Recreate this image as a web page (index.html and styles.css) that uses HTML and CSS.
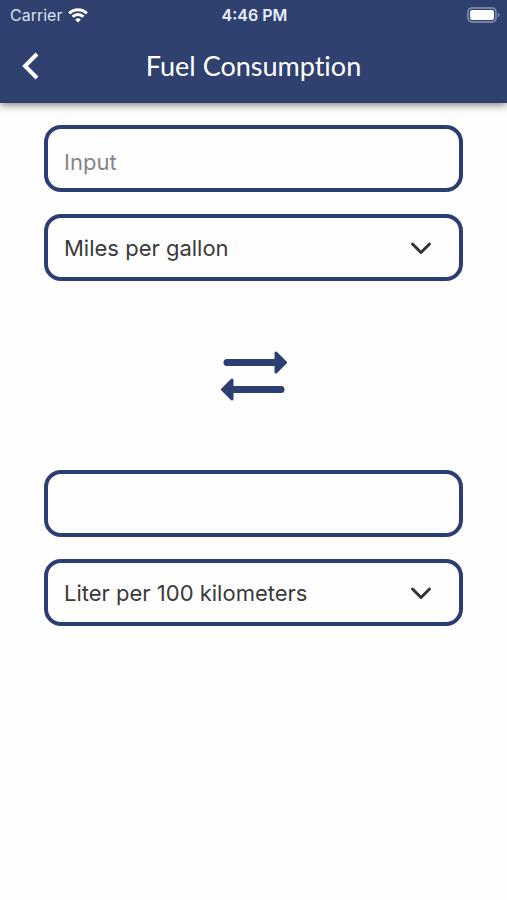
FILE: index.html
```
<!DOCTYPE html>
<html lang="en">
<head>
    <meta charset="UTF-8">
    <meta name="viewport" content="width=device-width, initial-scale=1.0">
    <title>Fuel Consumption</title>
    <link rel="stylesheet" href="styles.css">
</head>
<body>
    <header class="header">
        <div class="status-bar">
            <div class="carrier">
                <span>Carrier</span>
                <svg class="wifi" viewBox="0 0 20 15" aria-hidden="true">
                    <path d="M1.2 5.4a12.6 12.6 0 0 1 17.6 0" />
                    <path d="M4.6 8.8a7.7 7.7 0 0 1 10.8 0" />
                    <path class="wifi-dot" d="M10 14.6l-2.8-2.9a4 4 0 0 1 5.6 0z" />
                </svg>
            </div>
            <span class="time">4:46 PM</span>
            <svg class="battery" viewBox="0 0 34 16" aria-hidden="true">
                <rect class="battery-case" x="1" y="1" width="28" height="14" rx="4" />
                <rect class="battery-level" x="3" y="3" width="24" height="10" rx="2" />
                <path class="battery-cap" d="M31 6c2 .6 2 3.400 0 4z" />
            </svg>
        </div>
        <div class="title-bar">
            <button class="back" type="button" aria-label="Back">
                <svg viewBox="0 0 18 28" aria-hidden="true">
                    <path d="M16 2L4 14l12 12" />
                </svg>
            </button>
            <h1>Fuel Consumption</h1>
        </div>
    </header>

    <main class="converter">
        <div class="group">
            <input class="field" type="text" id="fromValue" placeholder="Input" aria-label="Input">
            <div class="select-box">
                <select class="field" id="fromUnit" aria-label="Convert from">
                    <option selected>Miles per gallon</option>
                    <option>Liter per 100 kilometers</option>
                </select>
                <svg class="chevron" viewBox="0 0 22 14" aria-hidden="true">
                    <path d="M2.500 3l8.500 8.500L19.500 3" />
                </svg>
            </div>
        </div>

        <button class="swap" type="button" id="swap" aria-label="Swap units">
            <svg viewBox="0 0 66 50" aria-hidden="true">
                <path class="swap-line" d="M6 11.500h50M10 38.500h50" />
                <path class="swap-head" d="M55 2l9.500 9.500L55 21zM11 29l-9.500 9.500L11 48z" />
            </svg>
        </button>

        <div class="group">
            <input class="field" type="text" id="toValue" aria-label="Result" readonly>
            <div class="select-box">
                <select class="field" id="toUnit" aria-label="Convert to">
                    <option>Miles per gallon</option>
                    <option selected>Liter per 100 kilometers</option>
                </select>
                <svg class="chevron" viewBox="0 0 22 14" aria-hidden="true">
                    <path d="M2.500 3l8.500 8.500L19.500 3" />
                </svg>
            </div>
        </div>
    </main>
</body>
</html>
```
FILE: styles.css
```
* {
    box-sizing: border-box;
}

body {
    margin: 0;
    background: #fefefe;
    font-family: Inter, "Liberation Sans", sans-serif;
}

svg {
    display: block;
    fill: none;
}

button {
    padding: 0;
    border: none;
    background: none;
    cursor: pointer;
}

.header {
    background: #304170;
    color: #fff;
    box-shadow: 0 2px 8px rgba(0, 0, 0, 0.5);
}

.status-bar {
    display: grid;
    grid-template-columns: 1fr auto 1fr;
    align-items: center;
    height: 30px;
    padding: 0 8px 0 10px;
    font-size: 16px;
}

.carrier {
    display: flex;
    align-items: center;
    gap: 6px;
    color: #d9e0f0;
}

.wifi {
    width: 20px;
    height: 15px;
    stroke: #fff;
    stroke-width: 3;
}

.wifi-dot {
    fill: #fff;
    stroke: none;
}

.time {
    color: #eaf0fb;
    font-weight: 600;
}

.battery {
    justify-self: end;
    width: 34px;
    height: 16px;
    margin-right: -2px;
}

.battery-case {
    stroke: #8c97b4;
    stroke-width: 1.5;
}

.battery-level {
    fill: #fff;
}

.battery-cap {
    fill: #8c97b4;
}

.title-bar {
    display: grid;
    grid-template-columns: 48px 1fr 48px;
    align-items: center;
    height: 73px;
    padding-bottom: 2px;
}

.back {
    padding-left: 21px;
}

.back svg {
    width: 18px;
    height: 28px;
    stroke: #fff;
    stroke-width: 4;
}

h1 {
    margin: 0;
    font-family: Lato, sans-serif;
    font-size: 27px;
    font-weight: 400;
    font-variant-ligatures: none;
    text-align: center;
}

.converter {
    padding: 22px 44px;
}

.group {
    display: grid;
    gap: 22px;
}

.field {
    display: block;
    width: 100%;
    height: 67px;
    padding: 0 16px;
    border: 4px solid #2b3e73;
    border-radius: 17px;
    background: #fefefe;
    color: #3a3a3a;
    font-family: inherit;
    font-size: 22px;
    appearance: none;
}

input.field {
    padding-top: 6px;
}

.field::placeholder {
    color: #858585;
}

.select-box {
    position: relative;
}

.chevron {
    position: absolute;
    top: 27px;
    right: 31px;
    width: 22px;
    height: 14px;
    stroke: #333;
    stroke-width: 3;
    stroke-linecap: round;
    stroke-linejoin: round;
    pointer-events: none;
}

.swap {
    display: block;
    margin: 70px auto 69px;
}

.swap svg {
    width: 66px;
    height: 50px;
    stroke: #2c3f72;
}

.swap-line {
    stroke-width: 7;
    stroke-linecap: round;
}

.swap-head {
    fill: #2c3f72;
    stroke-width: 3;
    stroke-linejoin: round;
}
```
